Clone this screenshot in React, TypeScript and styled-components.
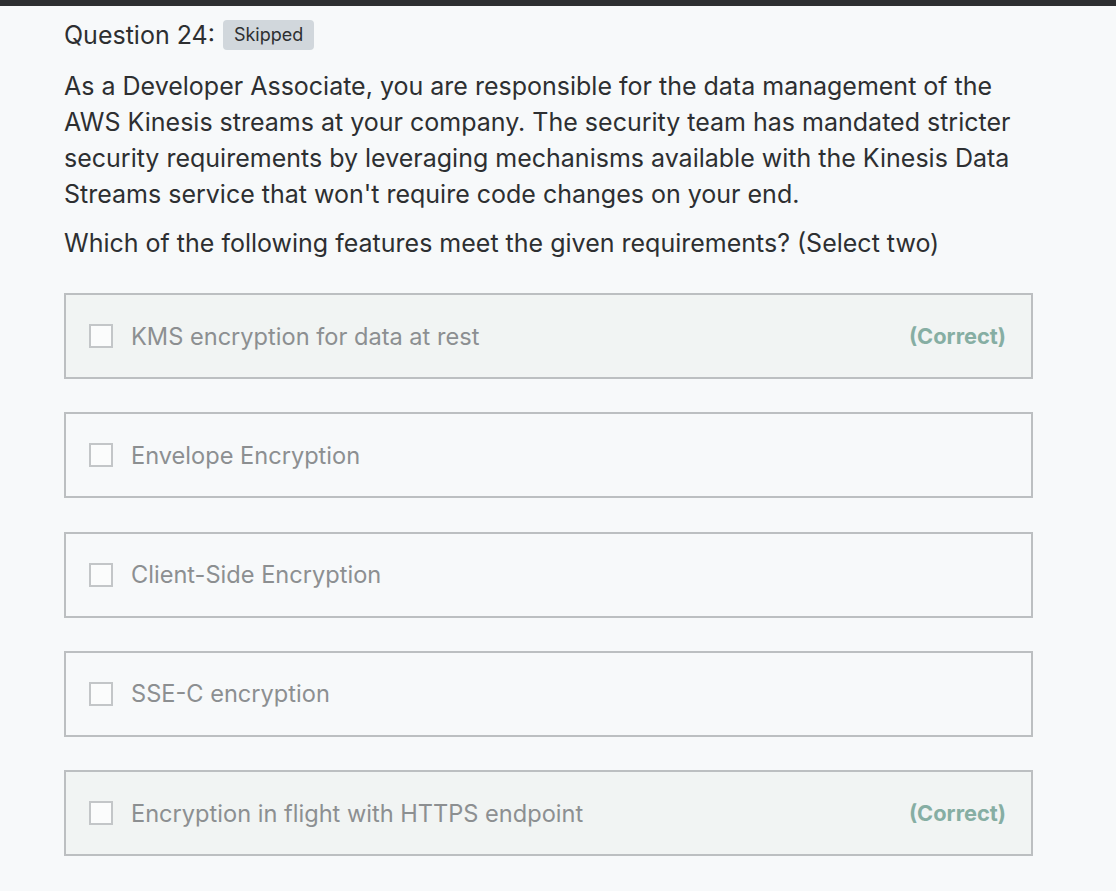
import React from "react";
import styled, { createGlobalStyle } from "styled-components";

const GlobalStyle = createGlobalStyle`
  html, body {
    margin: 0;
    padding: 0;
    background: #f7f9fa;
  }
  body {
    font-family: Inter, "Noto Sans", sans-serif;
    color: #2d2f31;
  }
`;

const TopBar = styled.div`
  height: 6px;
  background: #2d2f31;
`;

const Page = styled.main`
  padding: 14px 83px 30px 64px;
`;

const Heading = styled.div`
  display: flex;
  align-items: center;
  gap: 8px;
  height: 30px;
  font-size: 25px;
  line-height: 30px;
`;

const Badge = styled.span`
  display: inline-flex;
  align-items: center;
  height: 30px;
  padding: 0 11px;
  border-radius: 4px;
  background: #d1d7dc;
  color: #2d2f31;
  font-size: 18px;
`;

const Prompt = styled.p`
  margin: 18px 0 0;
  font-size: 25px;
  line-height: 36px;
`;

const Instruction = styled.p`
  margin: 13px 0 0;
  font-size: 25px;
  line-height: 36px;
`;

const Options = styled.ul`
  list-style: none;
  margin: 32px 0 0;
  padding: 0;
  display: flex;
  flex-direction: column;
  gap: 33.25px;
`;

const Option = styled.li<{ $correct?: boolean }>`
  display: flex;
  align-items: center;
  height: 86px;
  box-sizing: border-box;
  padding: 0 25px 0 23px;
  border: 2px solid #bcbfc1;
  background: ${(p) => (p.$correct ? "#f1f4f3" : "#f7f9fa")};
`;

const Box = styled.span`
  width: 24px;
  height: 24px;
  box-sizing: border-box;
  border: 2px solid #c3c6c8;
  background: #fbfcfc;
  flex: none;
`;

const Label = styled.span`
  margin-left: 18px;
  flex: 1;
  font-size: 23.6px;
  color: #8c8f91;
`;

const CorrectTag = styled.span`
  font-size: 21.8px;
  font-weight: 700;
  color: #86aea3;
`;

const options = [
  { text: "KMS encryption for data at rest", correct: true },
  { text: "Envelope Encryption", correct: false },
  { text: "Client-Side Encryption", correct: false },
  { text: "SSE-C encryption", correct: false },
  { text: "Encryption in flight with HTTPS endpoint", correct: true },
];

export default function App() {
  return (
    <>
      <GlobalStyle />
      <TopBar />
      <Page>
        <Heading>
          Question 24:
          <Badge>Skipped</Badge>
        </Heading>
        <Prompt>
          As a Developer Associate, you are responsible for the data management of the
          AWS Kinesis streams at your company. The security team has mandated stricter
          security requirements by leveraging mechanisms available with the Kinesis Data
          Streams service that won't require code changes on your end.
        </Prompt>
        <Instruction>
          Which of the following features meet the given requirements? (Select two)
        </Instruction>
        <Options>
          {options.map((o) => (
            <Option key={o.text} $correct={o.correct}>
              <Box />
              <Label>{o.text}</Label>
              {o.correct && <CorrectTag>(Correct)</CorrectTag>}
            </Option>
          ))}
        </Options>
      </Page>
    </>
  );
}
